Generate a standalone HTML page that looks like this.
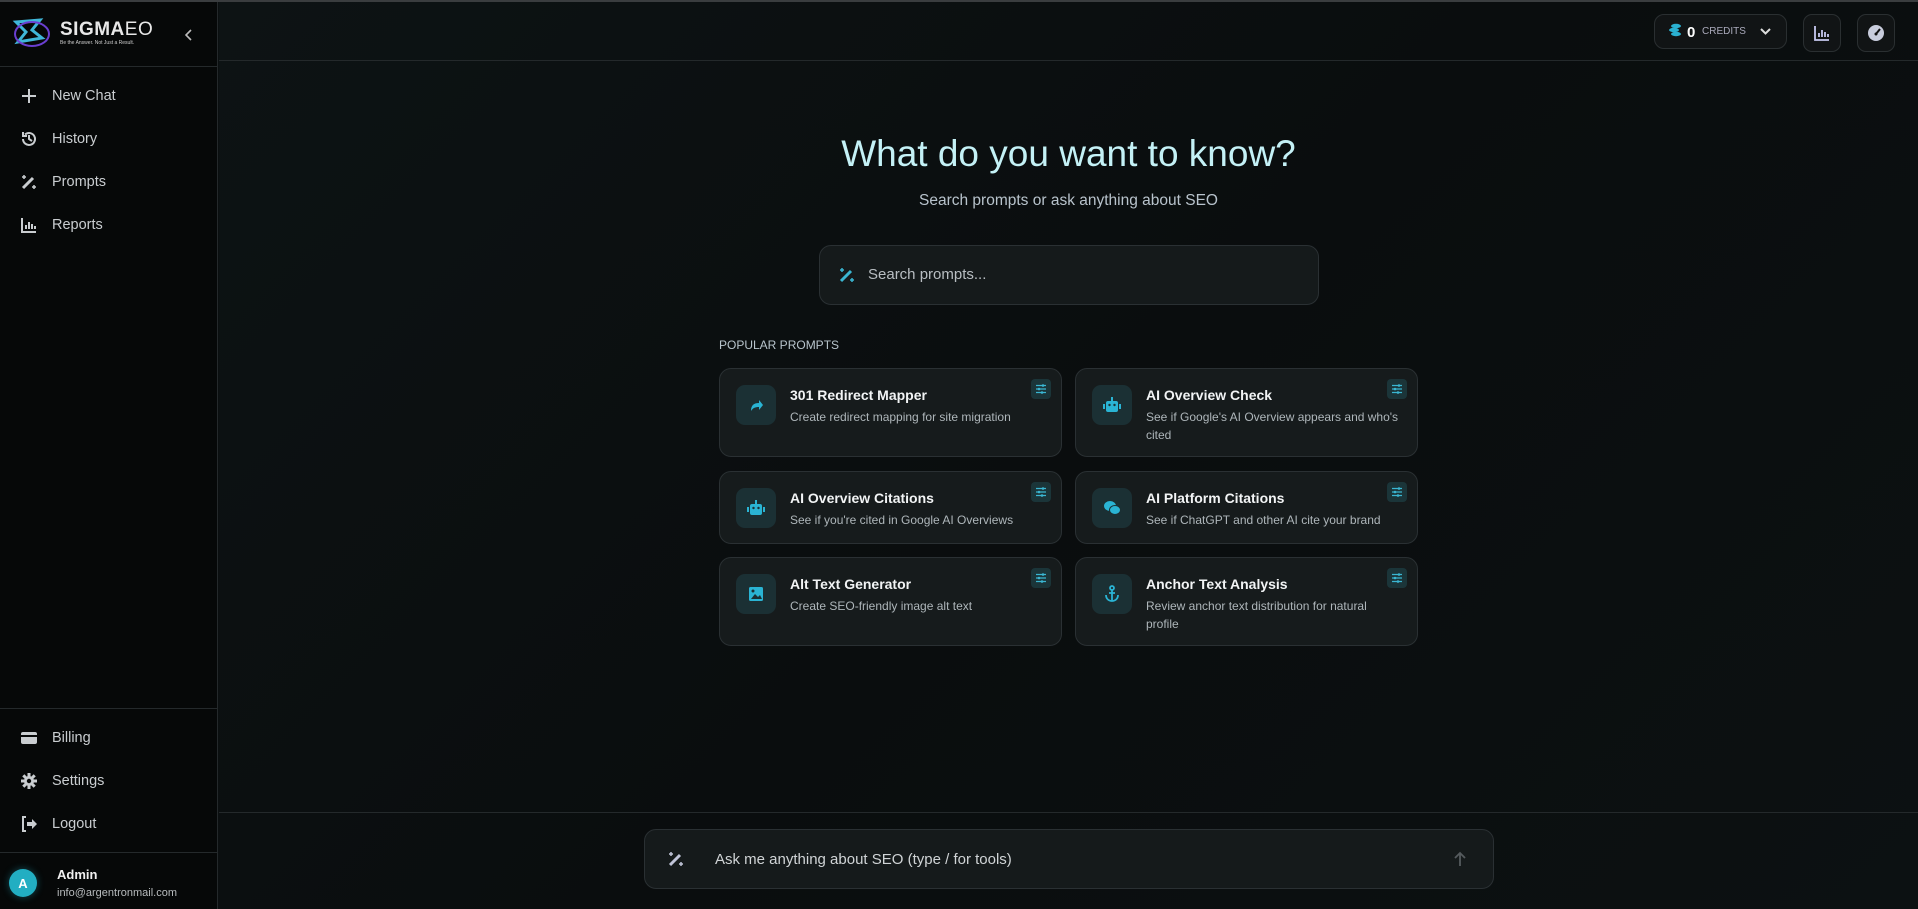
<!DOCTYPE html>
<html><head><meta charset="utf-8"><style>
*{box-sizing:border-box;margin:0;padding:0}
body{width:1918px;height:909px;overflow:hidden;background:#0b0f10;font-family:"Liberation Sans",sans-serif;color:#d6dadc;position:relative}
.topline{position:absolute;left:0;top:0;width:1918px;height:2px;background:#3a3d3f}
.side{position:absolute;left:0;top:2px;width:218px;height:907px;background:#060808;border-right:1px solid #24292b}
.main{position:absolute;left:219px;top:2px;right:0;bottom:0;background:linear-gradient(135deg,#0d1314 0%,#0a0d0e 50%,#0c1112 100%)}
.hline{position:absolute;height:1px;background:#24292b}
.nav{position:absolute;left:20px;display:flex;align-items:center;font-size:14.5px;color:#c9cdd0}
.nav svg{width:18px;height:18px;margin-right:14px}
.abs{position:absolute}
.card{position:absolute;width:343px;background:#161b1c;border:1px solid #2a3033;border-radius:12px}
.ib{position:absolute;left:16px;top:16px;width:40px;height:40px;border-radius:9px;background:#1b3034;display:flex;align-items:center;justify-content:center}
.ct{position:absolute;left:70px;top:18px;font-size:14px;font-weight:bold;color:#f2f4f5}
.cd{position:absolute;left:70px;top:39px;width:252px;font-size:12px;line-height:18px;color:#aeb6ba}
.fb{position:absolute;left:311px;top:10px;width:20px;height:20px;border-radius:4px;background:#1b3539;display:flex;align-items:center;justify-content:center}
.btn{position:absolute;top:12px;width:38px;height:38px;border:1px solid #2a2f31;border-radius:9px;background:#111415;display:flex;align-items:center;justify-content:center}
</style></head><body>
<div class="topline"></div>
<div class="side">
 <svg class="abs" style="left:12px;top:14px" width="40" height="36" viewBox="0 0 40 36"><path d="M4 6 L28 4 L20 14 L30 22 L6 26 L14 16 Z" fill="none" stroke="#3fb6d8" stroke-width="3"/><ellipse cx="20" cy="18" rx="17" ry="12" fill="none" stroke="#6a3fd0" stroke-width="2"/></svg>
 <div class="abs" style="left:60px;top:17px;font-size:19px;font-weight:bold;color:#e8e8e8;letter-spacing:0.5px">SIGMA<span style="font-weight:normal">EO</span></div>
 <div class="abs" style="left:60px;top:38px;font-size:5px;color:#ccc">Be the Answer. Not Just a Result.</div>
 <svg class="abs" style="left:185px;top:27px" width="8" height="12" viewBox="0 0 8 12"><path d="M6 1L1 6l5 5" fill="none" stroke="#bbb" stroke-width="1.6"/></svg>
 <div class="hline" style="left:0;top:64px;width:218px"></div>
 <div class="nav" style="top:85px"><svg viewBox="0 0 18 18"><path d="M9 2v14M2 9h14" stroke="#c9cdd0" stroke-width="2"/></svg>New Chat</div>
 <div class="nav" style="top:128px"><svg viewBox="0 0 18 18"><path d="M3 9a6 6 0 1 0 2-4.5M3 2v4h4M9 5v4l3 2" fill="none" stroke="#c9cdd0" stroke-width="2"/></svg>History</div>
 <div class="nav" style="top:171px"><svg viewBox="0 0 18 18"><path d="M3 15L13 5" stroke="#c9cdd0" stroke-width="3"/><path d="M4 2v4M2 4h4M14 12v4M12 14h4" stroke="#c9cdd0" stroke-width="1.5"/></svg>Prompts</div>
 <div class="nav" style="top:214px"><svg viewBox="0 0 18 18"><path d="M2 2v14h14M6 13V9M9 13V6M12 13V8M15 13V10" fill="none" stroke="#c9cdd0" stroke-width="2"/></svg>Reports</div>
 <div class="hline" style="left:0;top:706px;width:218px"></div>
 <div class="nav" style="top:727px"><svg viewBox="0 0 18 18"><rect x="1" y="3" width="16" height="12" rx="2" fill="#c9cdd0"/><rect x="1" y="6" width="16" height="2" fill="#060808"/></svg>Billing</div>
 <div class="nav" style="top:770px"><svg viewBox="0 0 18 18"><g stroke="#c9cdd0" stroke-width="3"><path d="M9 1v16M1 9h16M3.3 3.3l11.4 11.4M14.7 3.3L3.3 14.7"/></g><circle cx="9" cy="9" r="5" fill="#c9cdd0"/><circle cx="9" cy="9" r="2.2" fill="#060808"/></svg>Settings</div>
 <div class="nav" style="top:813px"><svg viewBox="0 0 18 18"><path d="M6 2H3v14h3" fill="none" stroke="#c9cdd0" stroke-width="2"/><path d="M7 7h5V4l5 5-5 5v-3H7z" fill="#c9cdd0"/></svg>Logout</div>
 <div class="hline" style="left:0;top:850px;width:218px"></div>
 <div class="abs" style="left:9px;top:867px;width:28px;height:28px;border-radius:50%;background:#22aec2;color:#fff;font-weight:bold;font-size:13px;display:flex;align-items:center;justify-content:center;box-shadow:0 0 8px rgba(34,174,194,.4)">A</div>
 <div class="abs" style="left:57px;top:865px;font-size:13px;font-weight:bold;color:#f0f0f0">Admin</div>
 <div class="abs" style="left:57px;top:885px;font-size:11px;color:#b8bcbe">info@argentronmail.com</div>
</div>
<div class="main">
 <div class="hline" style="left:0;top:58px;right:0"></div>
 <div class="abs" style="left:1435px;top:12px;width:133px;height:35px;border:1px solid #2a2f31;border-radius:10px;background:#111415"></div>
 <svg class="abs" style="left:1449px;top:21px" width="14" height="14" viewBox="0 0 14 14"><ellipse cx="8" cy="3" rx="5" ry="2.2" fill="#2ab0d0"/><ellipse cx="6" cy="7" rx="5" ry="2.2" fill="#2ab0d0"/><ellipse cx="8" cy="11" rx="5" ry="2.2" fill="#2ab0d0"/></svg>
 <div class="abs" style="left:1468px;top:22px;font-size:15px;font-weight:bold;color:#fff">0</div>
 <div class="abs" style="left:1483px;top:24px;font-size:10px;color:#aab">CREDITS</div>
 <svg class="abs" style="left:1541px;top:26px" width="11" height="8" viewBox="0 0 11 8"><path d="M1 1l4.5 4.5L10 1" fill="none" stroke="#ddd" stroke-width="2"/></svg>
 <div class="btn" style="left:1584px"><svg width="16" height="16" viewBox="0 0 16 16"><path d="M1 1v14h14M5 12V8M8 12V5M11 12V7M14 12V9" fill="none" stroke="#c6c9f0" stroke-width="1.8"/></svg></div>
 <div class="btn" style="left:1638px"><svg width="18" height="18" viewBox="0 0 18 18"><circle cx="9" cy="9" r="8" fill="#c8ccdc"/><path d="M9 10l4-5" stroke="#111" stroke-width="2"/><circle cx="9" cy="10" r="1.5" fill="#111"/></svg></div>
 <div class="abs" style="left:0;right:0;top:131px;text-align:center;font-size:37px;color:#c4f1f6">What do you want to know?</div>
 <div class="abs" style="left:0;right:0;top:190px;text-align:center;font-size:15.5px;color:#b8c3cc">Search prompts or ask anything about SEO</div>
 <div class="abs" style="left:600px;top:243px;width:500px;height:60px;border:1px solid #2a3033;border-radius:12px;background:#151a1b"></div>
 <svg class="abs" style="left:619px;top:264px" width="18" height="18" viewBox="0 0 18 18"><path d="M3 15L13 5" stroke="#3ab6d2" stroke-width="3"/><path d="M4 2v4M2 4h4M14 12v4M12 14h4" stroke="#3ab6d2" stroke-width="1.5"/></svg>
 <div class="abs" style="left:649px;top:264px;font-size:15px;color:#b8bec2">Search prompts...</div>
 <div class="abs" style="left:500px;top:336px;font-size:12px;color:#b8c4cc">POPULAR PROMPTS</div>
 <div class="hline" style="left:0;top:810px;right:0"></div>
 <div class="abs" style="left:425px;top:827px;width:850px;height:60px;border:1px solid #2a3033;border-radius:12px;background:#151a1b"></div>
 <svg class="abs" style="left:448px;top:848px" width="18" height="18" viewBox="0 0 18 18"><path d="M3 15L13 5" stroke="#c0c4d8" stroke-width="3"/><path d="M4 2v4M2 4h4M14 12v4M12 14h4" stroke="#c0c4d8" stroke-width="1.5"/></svg>
 <div class="abs" style="left:496px;top:849px;font-size:15px;color:#d0d4d6">Ask me anything about SEO (type / for tools)</div>
 <svg class="abs" style="left:1234px;top:849px" width="14" height="16" viewBox="0 0 14 16"><path d="M7 15V2M2 7l5-5 5 5" fill="none" stroke="#555b5e" stroke-width="1.8"/></svg>
</div>
<div class="card" style="left:719px;top:368px;height:89px"><div class="ib"><svg width="16" height="16" viewBox="0 0 16 16"><path d="M3 14c0-6 3-8 8-8V3l4 5-4 5V10c-4 0-6 1-8 4z" fill="#2ab4d4"/></svg></div><div class="ct">301 Redirect Mapper</div><div class="cd">Create redirect mapping for site migration</div><div class="fb"><svg width="12" height="12" viewBox="0 0 12 12"><path d="M1 2.5h10M1 6h10M1 9.5h10" stroke="#3ab6d2" stroke-width="1.2"/><circle cx="8" cy="2.5" r="1.3" fill="#3ab6d2"/><circle cx="4" cy="6" r="1.3" fill="#3ab6d2"/><circle cx="7" cy="9.5" r="1.3" fill="#3ab6d2"/></svg></div></div>
<div class="card" style="left:1075px;top:368px;height:89px"><div class="ib"><svg width="18" height="16" viewBox="0 0 18 16"><rect x="3" y="4" width="12" height="11" rx="2" fill="#2ab4d4"/><rect x="8" y="0" width="2" height="4" fill="#2ab4d4"/><rect x="0" y="7" width="2" height="5" fill="#2ab4d4"/><rect x="16" y="7" width="2" height="5" fill="#2ab4d4"/><circle cx="6.5" cy="8" r="1.2" fill="#1b3034"/><circle cx="11.5" cy="8" r="1.2" fill="#1b3034"/></svg></div><div class="ct">AI Overview Check</div><div class="cd" style="width:262px">See if Google's AI Overview appears and who's cited</div><div class="fb"><svg width="12" height="12" viewBox="0 0 12 12"><path d="M1 2.5h10M1 6h10M1 9.5h10" stroke="#3ab6d2" stroke-width="1.2"/><circle cx="8" cy="2.5" r="1.3" fill="#3ab6d2"/><circle cx="4" cy="6" r="1.3" fill="#3ab6d2"/><circle cx="7" cy="9.5" r="1.3" fill="#3ab6d2"/></svg></div></div>
<div class="card" style="left:719px;top:471px;height:73px"><div class="ib"><svg width="18" height="16" viewBox="0 0 18 16"><rect x="3" y="4" width="12" height="11" rx="2" fill="#2ab4d4"/><rect x="8" y="0" width="2" height="4" fill="#2ab4d4"/><rect x="0" y="7" width="2" height="5" fill="#2ab4d4"/><rect x="16" y="7" width="2" height="5" fill="#2ab4d4"/><circle cx="6.5" cy="8" r="1.2" fill="#1b3034"/><circle cx="11.5" cy="8" r="1.2" fill="#1b3034"/></svg></div><div class="ct">AI Overview Citations</div><div class="cd" style="width:262px">See if you're cited in Google AI Overviews</div><div class="fb"><svg width="12" height="12" viewBox="0 0 12 12"><path d="M1 2.5h10M1 6h10M1 9.5h10" stroke="#3ab6d2" stroke-width="1.2"/><circle cx="8" cy="2.5" r="1.3" fill="#3ab6d2"/><circle cx="4" cy="6" r="1.3" fill="#3ab6d2"/><circle cx="7" cy="9.5" r="1.3" fill="#3ab6d2"/></svg></div></div>
<div class="card" style="left:1075px;top:471px;height:73px"><div class="ib"><svg width="18" height="16" viewBox="0 0 18 16"><ellipse cx="7" cy="6" rx="6" ry="5" fill="#2ab4d4"/><ellipse cx="12" cy="10" rx="5.5" ry="4.5" fill="#2ab4d4" stroke="#1b3034" stroke-width="1"/></svg></div><div class="ct">AI Platform Citations</div><div class="cd" style="width:262px">See if ChatGPT and other AI cite your brand</div><div class="fb"><svg width="12" height="12" viewBox="0 0 12 12"><path d="M1 2.5h10M1 6h10M1 9.5h10" stroke="#3ab6d2" stroke-width="1.2"/><circle cx="8" cy="2.5" r="1.3" fill="#3ab6d2"/><circle cx="4" cy="6" r="1.3" fill="#3ab6d2"/><circle cx="7" cy="9.5" r="1.3" fill="#3ab6d2"/></svg></div></div>
<div class="card" style="left:719px;top:557px;height:89px"><div class="ib"><svg width="16" height="16" viewBox="0 0 16 16"><rect x="1" y="1" width="14" height="14" rx="1.5" fill="#2ab4d4"/><path d="M3 13l4-5 3 3 2-2 2 4z" fill="#1b3034"/><circle cx="5" cy="5" r="1.5" fill="#1b3034"/></svg></div><div class="ct">Alt Text Generator</div><div class="cd">Create SEO-friendly image alt text</div><div class="fb"><svg width="12" height="12" viewBox="0 0 12 12"><path d="M1 2.5h10M1 6h10M1 9.5h10" stroke="#3ab6d2" stroke-width="1.2"/><circle cx="8" cy="2.5" r="1.3" fill="#3ab6d2"/><circle cx="4" cy="6" r="1.3" fill="#3ab6d2"/><circle cx="7" cy="9.5" r="1.3" fill="#3ab6d2"/></svg></div></div>
<div class="card" style="left:1075px;top:557px;height:89px"><div class="ib"><svg width="16" height="18" viewBox="0 0 16 18"><circle cx="8" cy="3" r="2" fill="none" stroke="#2ab4d4" stroke-width="1.8"/><path d="M8 5v11M5 8h6M2 10c0 4 3 6 6 6s6-2 6-6" fill="none" stroke="#2ab4d4" stroke-width="1.8"/></svg></div><div class="ct">Anchor Text Analysis</div><div class="cd" style="width:240px">Review anchor text distribution for natural profile</div><div class="fb"><svg width="12" height="12" viewBox="0 0 12 12"><path d="M1 2.5h10M1 6h10M1 9.5h10" stroke="#3ab6d2" stroke-width="1.2"/><circle cx="8" cy="2.5" r="1.3" fill="#3ab6d2"/><circle cx="4" cy="6" r="1.3" fill="#3ab6d2"/><circle cx="7" cy="9.5" r="1.3" fill="#3ab6d2"/></svg></div></div>
</body></html>
